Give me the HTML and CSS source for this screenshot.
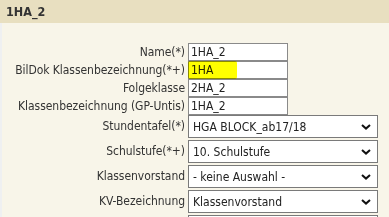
FILE: index.html
```html
<!DOCTYPE html>
<html>
<head>
<meta charset="utf-8">
<link rel="stylesheet" href="styles.css">
</head>
<body>
<div class="header">1HA_2</div>
<div class="panel">
  <div class="form">
    <label class="lbl">Name(*)</label>
    <div class="field"><input class="txt" type="text" value="1HA_2"></div>
    <label class="lbl">BilDok Klassenbezeichnung(*+)</label>
    <div class="field"><input class="txt" type="text" value="1HA"><span class="hl"></span></div>
    <label class="lbl">Folgeklasse</label>
    <div class="field"><input class="txt" type="text" value="2HA_2"></div>
    <label class="lbl">Klassenbezeichnung (GP-Untis)</label>
    <div class="field"><input class="txt" type="text" value="1HA_2"></div>

    <label class="lbl sel-lbl">Stundentafel(*)</label>
    <div class="field sel-field"><select class="sel"><option>HGA BLOCK_ab17/18</option></select><svg class="chev" width="10" height="6" viewBox="0 0 10 6"><path d="M1 1 L5 4.6 L9 1" fill="none" stroke="#111" stroke-width="2"/></svg></div>
    <label class="lbl sel-lbl">Schulstufe(*+)</label>
    <div class="field sel-field"><select class="sel"><option>10. Schulstufe</option></select><svg class="chev" width="10" height="6" viewBox="0 0 10 6"><path d="M1 1 L5 4.6 L9 1" fill="none" stroke="#111" stroke-width="2"/></svg></div>
    <label class="lbl sel-lbl">Klassenvorstand</label>
    <div class="field sel-field"><select class="sel"><option>- keine Auswahl -</option></select><svg class="chev" width="10" height="6" viewBox="0 0 10 6"><path d="M1 1 L5 4.6 L9 1" fill="none" stroke="#111" stroke-width="2"/></svg></div>
    <label class="lbl sel-lbl">KV-Bezeichnung</label>
    <div class="field sel-field"><select class="sel"><option>Klassenvorstand</option></select><svg class="chev" width="10" height="6" viewBox="0 0 10 6"><path d="M1 1 L5 4.6 L9 1" fill="none" stroke="#111" stroke-width="2"/></svg></div>
    <label class="lbl sel-lbl"></label>
    <div class="field sel-field"><select class="sel"><option></option></select></div>
  </div>
</div>
</body>
</html>
```
FILE: styles.css
```css
html, body {
  margin: 0;
  padding: 0;
}
body {
  width: 389px;
  height: 217px;
  overflow: hidden;
  background: #eff0f1;
  font-family: "DejaVu Sans Condensed", "DejaVu Sans", sans-serif;
  font-size: 12px;
  color: #333;
}
.header {
  height: 23px;
  line-height: 23px;
  background: #e8dfc0;
  padding-left: 6px;
  font-weight: bold;
  font-size: 12.5px;
  color: #333;
}
.panel {
  margin-left: 2px;
  background: #f8f5e9;
  padding-top: 20px;
  height: 194px;
  box-sizing: border-box;
  overflow: hidden;
}
.form {
  display: grid;
  grid-template-columns: 183px 190px;
  column-gap: 3px;
}
.lbl {
  text-align: right;
  white-space: nowrap;
  height: 18px;
  line-height: 18px;
  color: #333;
  letter-spacing: -0.05px;
}
.sel-lbl {
  height: 23px;
  line-height: 23px;
  margin-bottom: 2px;
}
.field {
  position: relative;
}
.txt {
  display: block;
  box-sizing: border-box;
  width: 100px;
  height: 18px;
  margin: 0;
  border: 1px solid #8a8a8a;
  padding: 0 2px;
  background: #fff;
  font-family: inherit;
  font-size: 12px;
  color: #222;
  outline: none;
}
.hl {
  position: absolute;
  left: 0;
  top: 0;
  width: 49px;
  height: 18px;
  background: #ffff00;
  mix-blend-mode: multiply;
  border-radius: 2px;
}
.sel-field {
  height: 23px;
  margin-bottom: 2px;
}
.sel {
  display: block;
  box-sizing: border-box;
  width: 190px;
  height: 23px;
  margin: 0;
  border: 1px solid #7a7a7a;
  border-radius: 0;
  padding: 0 0 0 4px;
  background: #fff;
  -webkit-appearance: none;
  appearance: none;
  font-family: inherit;
  font-size: 12px;
  color: #222;
  outline: none;
}
.chev {
  position: absolute;
  right: 7px;
  top: 9px;
  pointer-events: none;
}
```
